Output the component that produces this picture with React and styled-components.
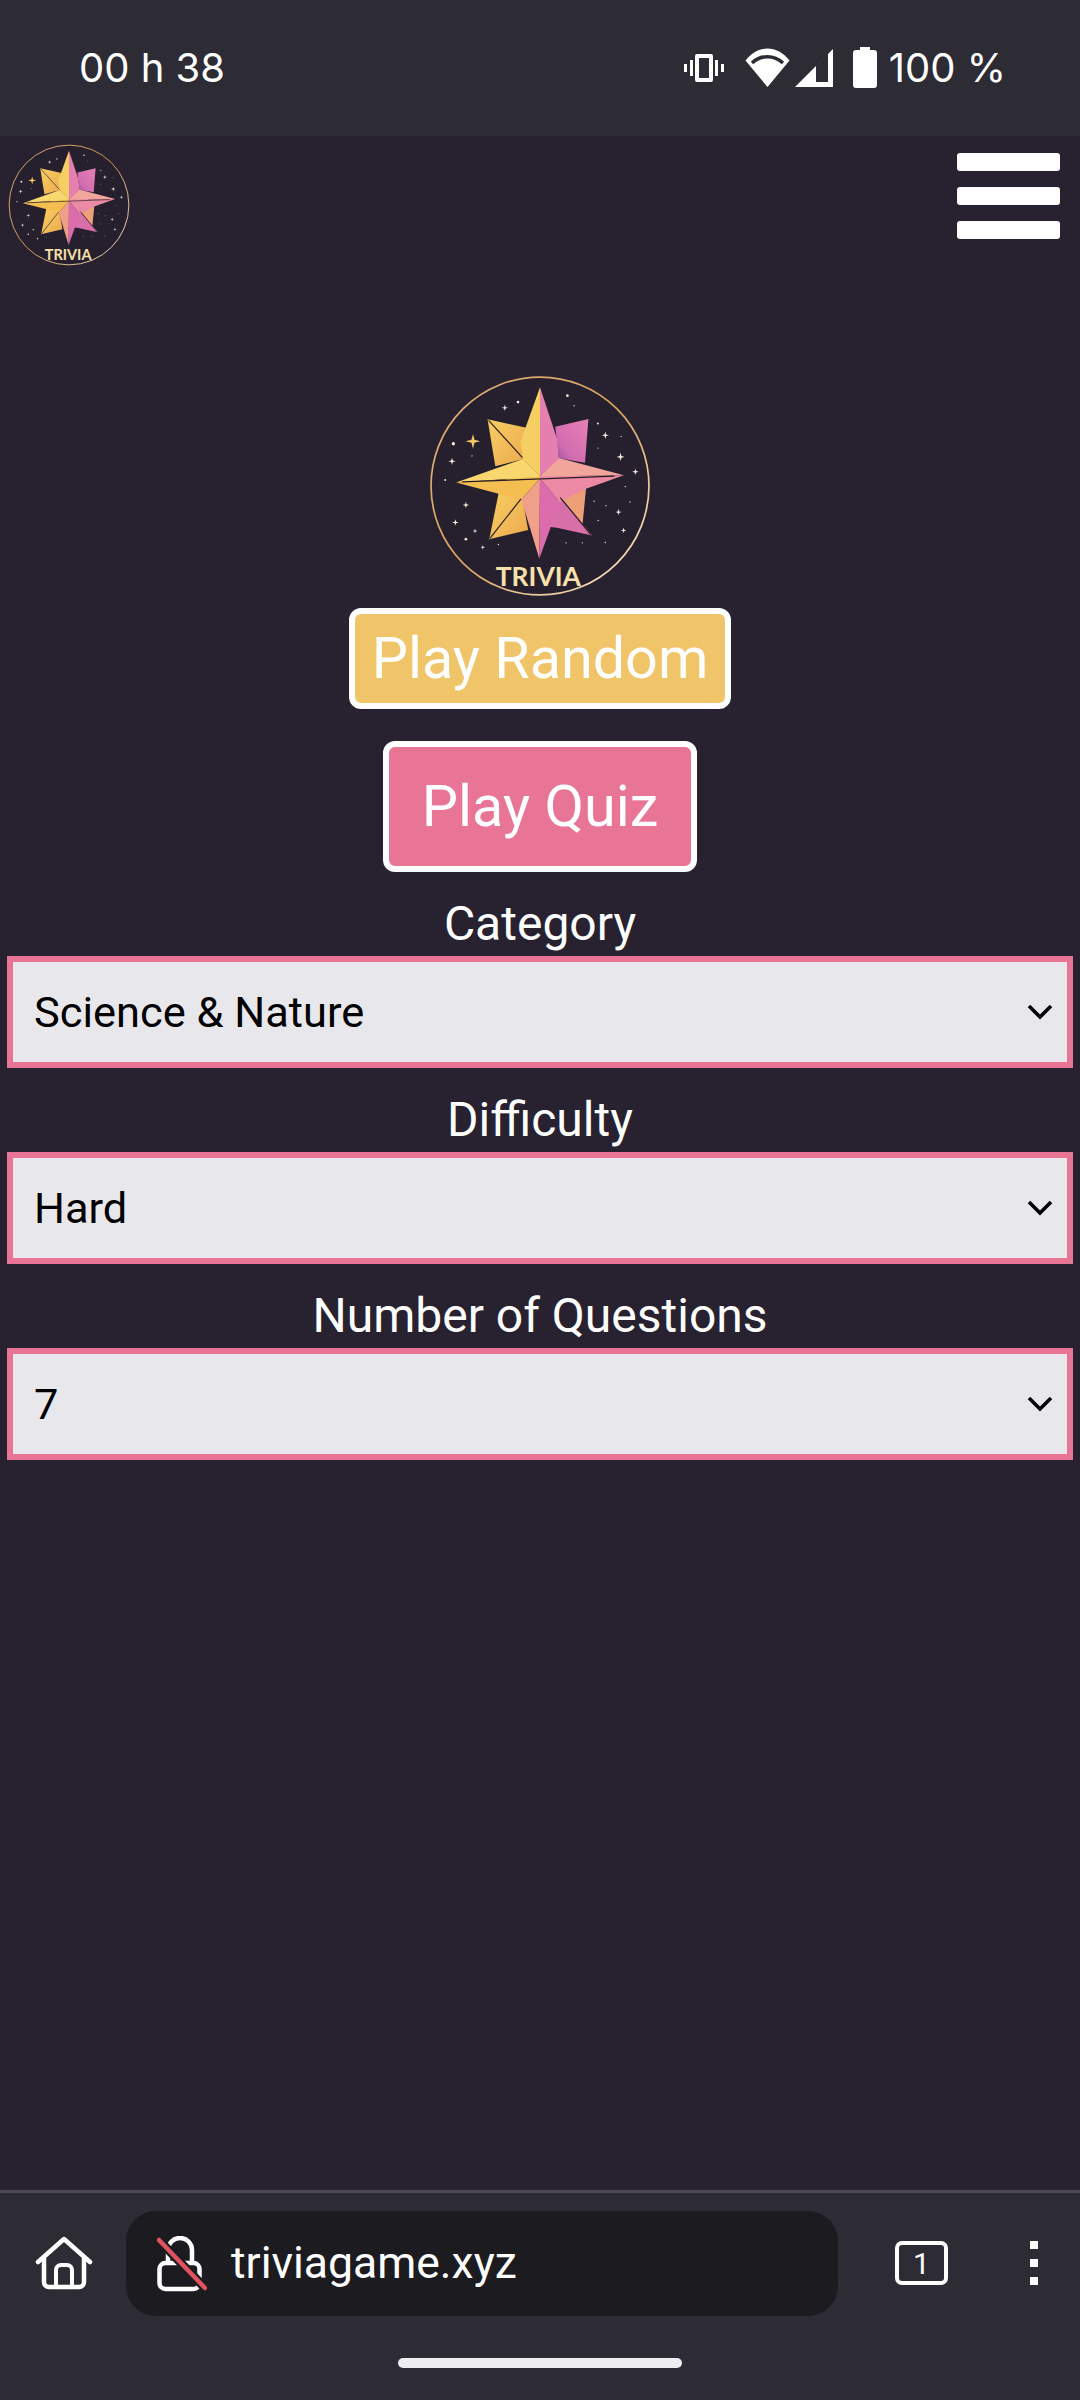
import React, { useId } from "react";
import styled, { createGlobalStyle } from "styled-components";

const GlobalStyle = createGlobalStyle`
	html, body {
		margin: 0;
		padding: 0;
		background: #282230;
	}
`;

const Screen = styled.div`
	width: 1080px;
	height: 2400px;
	display: flex;
	flex-direction: column;
	overflow: hidden;
	background: #282230;
	font-family: Roboto, "Liberation Sans", sans-serif;
	color: #fff;
`;

const StatusBar = styled.div`
	height: 136px;
	flex: none;
	box-sizing: border-box;
	padding: 0 74px 1px 79px;
	display: flex;
	align-items: center;
	justify-content: space-between;
	background: #2d2c35;
	font-family: Inter, "Open Sans", sans-serif;
	font-size: 40px;
`;

const StatusIcons = styled.div`
	display: flex;
	align-items: center;
`;

const StatusIcon = styled.svg`
	display: block;
	margin-left: ${ ( props ) => props.$gap }px;
	fill: #fff;
`;

const BatteryText = styled.span`
	margin-left: 12px;
`;

const Main = styled.main`
	flex: 1;
	display: flex;
	flex-direction: column;
	align-items: center;
`;

const Header = styled.header`
	align-self: stretch;
	display: flex;
	justify-content: space-between;
	align-items: flex-start;
	padding: 8px 20px 0 8px;
`;

const Hamburger = styled.div`
	margin-top: 9px;
	display: flex;
	flex-direction: column;
	gap: 16px;
`;

const HamburgerBar = styled.span`
	display: block;
	width: 103px;
	height: 18px;
	border-radius: 3px;
	background: #fff;
`;

const LogoSvg = styled.svg`
	display: block;
	width: ${ ( props ) => props.$size }px;
	height: ${ ( props ) => props.$size }px;
	flex: none;
`;

const HeroLogo = styled.div`
	margin-top: 109px;
`;

const PlayButton = styled.button`
	display: block;
	box-sizing: border-box;
	border: 6px solid #fff;
	border-radius: 12px;
	color: #fff;
	font-family: Roboto, "Liberation Sans", sans-serif;
	font-size: 57.5px;
	line-height: 63px;
	background: ${ ( props ) => props.$color };
	padding: ${ ( props ) => props.$padY }px ${ ( props ) => props.$padX }px;
	margin: ${ ( props ) => props.$top }px 0 0;
`;

const FieldLabel = styled.div`
	margin-top: 24px;
	height: 56px;
	line-height: 56px;
	font-size: 48px;
	text-align: center;
`;

const SelectBox = styled.div`
	align-self: stretch;
	margin: 4px 7px 0;
	height: 112px;
	box-sizing: border-box;
	border: 6px solid #e97596;
	background: #e8e8ec;
	color: #000;
	font-size: 43.4px;
	display: flex;
	align-items: center;
	justify-content: space-between;
	padding: 0 14px 0 21px;
`;

const Chevron = styled.svg`
	display: block;
	width: 26px;
	height: 18px;
	fill: none;
	stroke: #000;
	stroke-width: 3.6;
`;

const BottomBar = styled.div`
	height: 210px;
	flex: none;
	box-sizing: border-box;
	border-top: 3px solid #4b4953;
	background: #2d2c35;
	display: flex;
	flex-direction: column;
`;

const Toolbar = styled.div`
	display: flex;
	align-items: center;
	margin-top: 18px;
	height: 105px;
`;

const HomeIcon = styled.svg`
	display: block;
	width: 58px;
	height: 54px;
	margin-left: 35px;
	margin-top: -1px;
	fill: none;
	stroke: #fff;
	stroke-width: 4.5;
	stroke-linejoin: round;
	stroke-linecap: round;
`;

const UrlPill = styled.div`
	margin-left: 33px;
	width: 712px;
	height: 105px;
	border-radius: 30px;
	background: #1c1b20;
	display: flex;
	align-items: center;
	padding-left: 31px;
	box-sizing: border-box;
	font-size: 44.5px;
`;

const LockIcon = styled.svg`
	display: block;
	width: 50px;
	height: 56px;
	fill: none;
	stroke-width: 4.5;
	stroke-linecap: round;
`;

const UrlText = styled.span`
	margin-left: 24px;
	margin-top: -2px;
`;

const TabCounter = styled.div`
	margin-left: 57px;
	margin-top: -1px;
	width: 53px;
	height: 44px;
	box-sizing: border-box;
	border: 4px solid #fff;
	border-radius: 7px;
	display: flex;
	align-items: center;
	justify-content: center;
	font-size: 30px;
`;

const MenuDots = styled.div`
	margin-left: 82px;
	margin-top: -2px;
	display: flex;
	flex-direction: column;
	gap: 10px;
`;

const MenuDot = styled.span`
	display: block;
	width: 8px;
	height: 8px;
	background: #fff;
`;

const HomeIndicator = styled.div`
	width: 284px;
	height: 10px;
	margin: 42px auto 0;
	border-radius: 5px;
	background: #eeeef0;
`;

const LogoText = styled.text`
	font-family: Lato, "Open Sans", sans-serif;
	font-size: 78px;
	font-weight: 700;
`;

const sparkles = [
	[ 316, 149, 8 ], [ 222, 248, 18 ], [ 160, 307, 9 ], [ 201, 436, 8 ], [ 170, 488, 8 ],
	[ 228, 513, 6 ], [ 251, 561, 6 ], [ 613, 230, 9 ], [ 658, 294, 10 ], [ 702, 338, 8 ],
	[ 652, 457, 8 ], [ 667, 511, 7 ],
];

const specks = [
	[ 355, 132, 4 ], [ 164, 255, 5 ], [ 501, 113, 4 ], [ 591, 195, 3 ], [ 140, 362, 3 ],
	[ 201, 537, 4 ], [ 297, 553, 2 ], [ 591, 268, 2 ], [ 219, 291, 2 ], [ 580, 425, 2 ],
	[ 615, 438, 2 ], [ 686, 427, 2 ], [ 672, 382, 2 ], [ 545, 548, 2 ], [ 497, 548, 2 ],
	[ 613, 547, 2 ], [ 592, 482, 2 ], [ 660, 234, 2 ], [ 521, 143, 2 ],
];

const facets = [
	[ "265,183 380,208 372,300 288,322", "url(#GOLD)" ],
	[ "563,182 465,205 476,298 553,311", "url(#ROSE)" ],
	[ "270,537 298,400 368,415 385,510", "url(#GOLD)" ],
	[ "574,526 478,410 556,388 545,500", "#eda078" ],
	[ "574,526 478,412 440,500 470,503", "#d96fa8" ],
	[ "370,300 420,352 420,358 365,420 295,402", "#f4be50" ],
	[ "476,298 420,352 420,358 478,428 556,388", "#ec8aa6" ],
	[ "420,88 362,250 370,300 420,352", "#f6cf62" ],
	[ "420,88 470,240 476,298 420,352", "#e57fb0" ],
	[ "172,370 370,300 420,352", "#f8d76f" ],
	[ "172,370 420,354 365,415 295,402", "#f4be50" ],
	[ "668,348 476,297 420,352", "#f2a69b" ],
	[ "668,348 420,352 480,410 556,388", "#ec8aa6" ],
	[ "418,595 365,420 420,358", "#ef9f8a" ],
	[ "418,595 478,428 420,358", "#dc6cab" ],
];

const Logo = ( { size } ) => {
	const id = useId();
	const withIds = ( fill ) => fill.replace( "GOLD", `${ id }g` ).replace( "ROSE", `${ id }r` );

	return (
		<LogoSvg $size={ size } viewBox="92 52 656 656">
			<defs>
				<linearGradient id={ `${ id }g` } x1="0" y1="0" x2="1" y2="1">
					<stop offset="0" stopColor="#f7cf62" />
					<stop offset="1" stopColor="#eda94f" />
				</linearGradient>
				<linearGradient id={ `${ id }r` } x1="1" y1="0" x2="0" y2="1">
					<stop offset="0" stopColor="#e67fb5" />
					<stop offset="0.7" stopColor="#d26cb0" />
					<stop offset="1" stopColor="#8e4ca6" />
				</linearGradient>
				<linearGradient id={ `${ id }c` } x1="0" y1="0" x2="1" y2="1">
					<stop offset="0" stopColor="#e3b27c" />
					<stop offset="0.5" stopColor="#d9a35f" />
					<stop offset="1" stopColor="#fff2d8" />
				</linearGradient>
			</defs>
			<circle cx="420" cy="380" r="322" fill="#261f2e" stroke={ `url(#${ id }c)` } strokeWidth="5" />
			{ specks.map( ( [ x, y, r ] ) => <circle key={ `${ x }-${ y }` } cx={ x } cy={ y } r={ r } fill="#f3e6d0" /> ) }
			{ sparkles.map( ( [ x, y, r ] ) => (
				<path
					key={ `${ x }-${ y }` }
					d={ `M${ x } ${ y - r * 1.2 }L${ x + r * 0.25 } ${ y - r * 0.25 }L${ x + r * 1.2 } ${ y }L${ x + r * 0.25 } ${ y + r * 0.25 }L${ x } ${ y + r * 1.2 }L${ x - r * 0.25 } ${ y + r * 0.25 }L${ x - r * 1.2 } ${ y }L${ x - r * 0.25 } ${ y - r * 0.25 }Z` }
					fill={ r > 15 ? "#f2c765" : "#fbf4e6" }
				/>
			) ) }
			{ facets.map( ( [ points, fill ] ) => <polygon key={ points } points={ points } fill={ withIds( fill ) } /> ) }
			<path d="M268 186L368 296M272 535L364 418M480 414L570 524M190 368L640 351" stroke="#2a1d24" strokeWidth="3.5" fill="none" />
			<LogoText x="415" y="677" textAnchor="middle" fill="#f8e2ac">TRIVIA</LogoText>
		</LogoSvg>
	);
};

const fields = [
	{ label: "Category", value: "Science & Nature" },
	{ label: "Difficulty", value: "Hard" },
	{ label: "Number of Questions", value: "7" },
];

const App = () => (
	<Screen>
		<GlobalStyle />
		<StatusBar>
			<span>00 h 38</span>
			<StatusIcons>
				<StatusIcon $gap={ 0 } width="40" height="30" viewBox="0 0 40 30">
					<path fillRule="evenodd" d="M13 1h14a2 2 0 0 1 2 2v24a2 2 0 0 1-2 2H13a2 2 0 0 1-2-2V3a2 2 0 0 1 2-2zm2 4v20h10V5z" />
					<path d="M6 7h3v16H6zM31 7h3v16h-3zM0 11h3v8H0zM37 11h3v8h-3z" />
				</StatusIcon>
				<StatusIcon $gap={ 21 } width="45" height="39" viewBox="0 0 45 39">
					<path d="M22.5 39L0.5 12.5C13-3.5 32-3.5 44.5 12.5Z" />
					<path d="M7 15C16 6.5 29 6.5 38 15" fill="none" stroke="#2d2c35" strokeWidth="3.5" />
				</StatusIcon>
				<StatusIcon $gap={ 5 } width="38" height="38" viewBox="0 0 38 38">
					<path fillRule="evenodd" d="M0 38L38 0V38ZM21 17V33H33V5Z" />
				</StatusIcon>
				<StatusIcon $gap={ 20 } width="24" height="41" viewBox="0 0 24 41">
					<path d="M7 0h10v3h4a3 3 0 0 1 3 3v32a3 3 0 0 1-3 3H3a3 3 0 0 1-3-3V6a3 3 0 0 1 3-3h4z" />
				</StatusIcon>
				<BatteryText>100 %</BatteryText>
			</StatusIcons>
		</StatusBar>
		<Main>
			<Header>
				<Logo size={ 122 } />
				<Hamburger>
					<HamburgerBar />
					<HamburgerBar />
					<HamburgerBar />
				</Hamburger>
			</Header>
			<HeroLogo>
				<Logo size={ 222 } />
			</HeroLogo>
			<PlayButton $color="#f0c469" $padX={ 17 } $padY={ 13 } $top={ 11 }>Play Random</PlayButton>
			<PlayButton $color="#e97596" $padX={ 33 } $padY={ 28 } $top={ 32 }>Play Quiz</PlayButton>
			{ fields.map( ( field ) => (
				<React.Fragment key={ field.label }>
					<FieldLabel>{ field.label }</FieldLabel>
					<SelectBox>
						<span>{ field.value }</span>
						<Chevron viewBox="0 0 26 18">
							<path d="M2 3L13 14L24 3" />
						</Chevron>
					</SelectBox>
				</React.Fragment>
			) ) }
		</Main>
		<BottomBar>
			<Toolbar>
				<HomeIcon viewBox="0 0 58 54">
					<path d="M3 26L29 3L55 26" />
					<path d="M9 22V46a5 5 0 0 0 5 5H44a5 5 0 0 0 5-5V22" />
					<path d="M21 51V34a5 5 0 0 1 5-5h6a5 5 0 0 1 5 5V51" strokeWidth="4" />
				</HomeIcon>
				<UrlPill>
					<LockIcon viewBox="0 0 50 56">
						<path d="M11 26V14a12 12 0 0 1 24 0V26" stroke="#fff" />
						<rect x="2.5" y="27" width="40" height="26" rx="6" stroke="#fff" />
						<path d="M2 4L48 52" stroke="#1c1b20" strokeWidth="9" strokeLinecap="butt" />
						<path d="M2 4L48 52" stroke="#e0525f" strokeWidth="4.5" />
					</LockIcon>
					<UrlText>triviagame.xyz</UrlText>
				</UrlPill>
				<TabCounter>1</TabCounter>
				<MenuDots>
					<MenuDot />
					<MenuDot />
					<MenuDot />
				</MenuDots>
			</Toolbar>
			<HomeIndicator />
		</BottomBar>
	</Screen>
);

export default App;
